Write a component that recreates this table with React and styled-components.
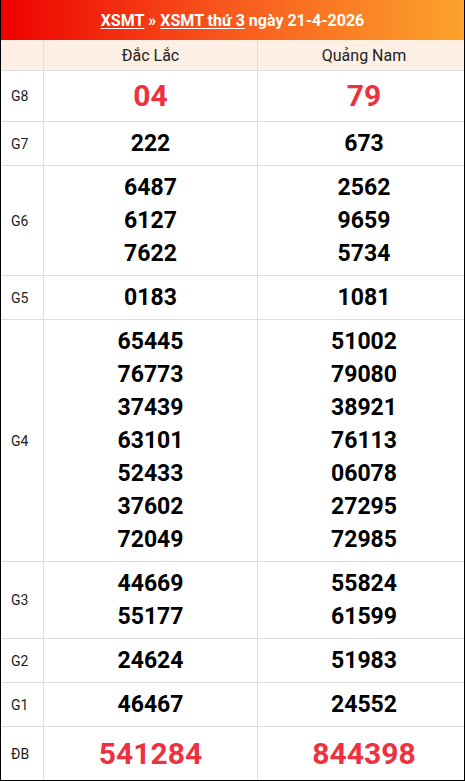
import React from 'react'
import styled, { createGlobalStyle } from 'styled-components'

const Global = createGlobalStyle`
  html, body { margin: 0; padding: 0; background: #fff; }
  body { font-family: Roboto, "Liberation Sans", sans-serif; }
`

const rows = [
  { label: 'G8', a: ['04'], b: ['79'], kind: 'big' },
  { label: 'G7', a: ['222'], b: ['673'] },
  { label: 'G6', a: ['6487', '6127', '7622'], b: ['2562', '9659', '5734'] },
  { label: 'G5', a: ['0183'], b: ['1081'] },
  { label: 'G4', a: ['65445', '76773', '37439', '63101', '52433', '37602', '72049'], b: ['51002', '79080', '38921', '76113', '06078', '27295', '72985'] },
  { label: 'G3', a: ['44669', '55177'], b: ['55824', '61599'] },
  { label: 'G2', a: ['24624'], b: ['51983'] },
  { label: 'G1', a: ['46467'], b: ['24552'] },
  { label: 'ĐB', a: ['541284'], b: ['844398'], kind: 'special' },
]

const App = () => {
  return (
    <>
      <Global />
      <Box>
        <Title>
          <Link>XSMT</Link>&nbsp;»&nbsp;<Link>XSMT thứ 3</Link>&nbsp;ngày 21-4-2026
        </Title>
        <Table>
          <HeadRow>
            <LabelCell />
            <HeadCell>Đắc Lắc</HeadCell>
            <HeadCell>Quảng Nam</HeadCell>
          </HeadRow>
          {rows.map((r) => (
            <Row key={r.label}>
              <LabelCell>{r.label}</LabelCell>
              <Cell>
                {r.a.map((n, i) => <Num key={i} kind={r.kind}>{n}</Num>)}
              </Cell>
              <Cell>
                {r.b.map((n, i) => <Num key={i} kind={r.kind}>{n}</Num>)}
              </Cell>
            </Row>
          ))}
        </Table>
      </Box>
    </>
  )
}

export default App

const Box = styled.div`
  width: 465px;
  height: 781px;
  box-sizing: border-box;
  border: 1px solid #000;
  border-top: none;
  overflow: hidden;
`
const Title = styled.div`
  height: 40px;
  margin: 0 -1px;
  display: flex;
  align-items: center;
  justify-content: center;
  background: linear-gradient(90deg, #ee0000 0%, #f85a1e 50%, #fca42b 100%);
  color: #fff;
  font-weight: bold;
  font-size: 16px;
`
const Link = styled.span`
  text-decoration: underline;
  text-underline-offset: 2px;
`
const Table = styled.div`
  display: flex;
  flex-direction: column;
`
const HeadRow = styled.div`
  display: grid;
  grid-template-columns: 43px 214px 1fr;
  height: 30px;
  background: #fdefe3;
  border-bottom: 1px solid #ddd;
`
const Row = styled.div`
  display: grid;
  grid-template-columns: 43px 214px 1fr;
  border-bottom: 1px solid #ddd;
  &:last-child { border-bottom: none; }
`
const LabelCell = styled.div`
  display: flex;
  align-items: center;
  padding-left: 10px;
  border-right: 1px solid #ddd;
  font-size: 14px;
  color: #222;
`
const HeadCell = styled.div`
  display: flex;
  align-items: center;
  justify-content: center;
  border-right: 1px solid #ddd;
  font-size: 16px;
  color: #222;
  &:last-child { border-right: none; padding-left: 6px; }
`
const Cell = styled.div`
  display: flex;
  flex-direction: column;
  align-items: center;
  justify-content: center;
  padding: 5px 0;
  border-right: 1px solid #ddd;
  &:last-child { border-right: none; padding-left: 6px; }
`
const Num = styled.div`
  font-weight: bold;
  font-size: ${(p) => (p.kind === 'special' ? '30px' : p.kind === 'big' ? '30px' : '23px')};
  line-height: ${(p) => (p.kind === 'special' ? '43px' : p.kind === 'big' ? '40px' : '33px')};
  color: ${(p) => (p.kind ? '#ee3140' : '#000')};
`
